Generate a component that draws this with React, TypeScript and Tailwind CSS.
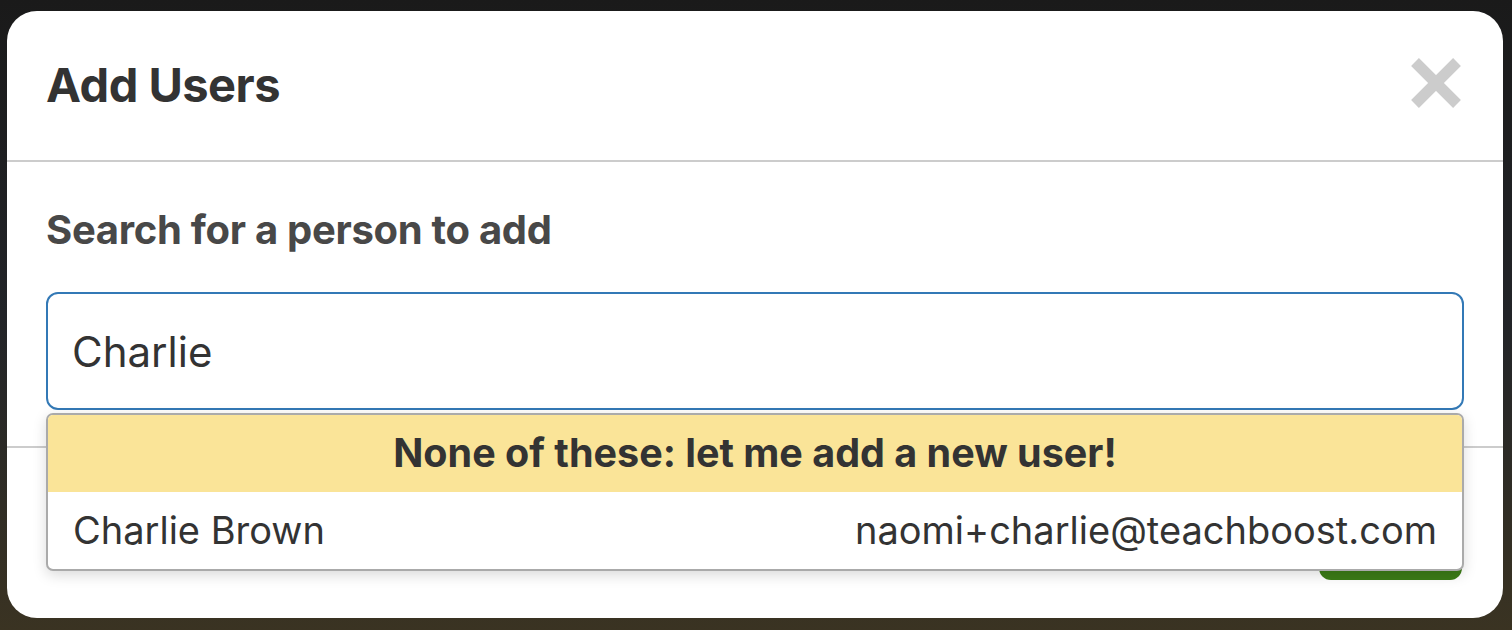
import React from "react";

/* ------------------------------ ADD USERS MODAL ------------------------------ */

function CloseIcon() {
  return (
    <svg width="50" height="50" viewBox="0 0 50 50" className="block">
      <line x1="4" y1="4" x2="46" y2="46" stroke="#cccccc" strokeWidth="11" />
      <line x1="46" y1="4" x2="4" y2="46" stroke="#cccccc" strokeWidth="11" />
    </svg>
  );
}

export default function App() {
  return (
    <div
      className="h-[630px] w-full overflow-hidden bg-gradient-to-b from-[#1a1a1a] via-[#222428] to-[#3a3322] pt-[11px] pl-[7px]"
      style={{ fontFamily: "Inter, 'Noto Sans', sans-serif" }}
    >
      <div className="flex h-[607px] w-[1496px] flex-col rounded-[30px] bg-white">
        {/* Header */}
        <div className="flex h-[151px] items-center justify-between border-b-2 border-[#cccccc] pl-[39px] pr-[42px]">
          <h1 className="text-[47px] font-bold tracking-[-0.5px] text-[#333333]">
            Add Users
          </h1>
          <button className="-mt-[6px]">
            <CloseIcon />
          </button>
        </div>

        {/* Body */}
        <div className="h-[286px] border-b-2 border-[#cccccc] px-[39px] pt-[38px]">
          <label className="block text-[40px] font-bold tracking-[-0.3px] text-[#484848]">
            Search for a person to add
          </label>

          <div className="relative mt-[32px]">
            <div className="flex h-[118px] items-center rounded-[12px] border-2 border-[#3379b6] px-[24px] text-[42px] text-[#333333]">
              Charlie
            </div>

            {/* Suggestions */}
            <div className="absolute top-[121px] left-0 right-0 z-10 overflow-hidden rounded-[7px] border-2 border-[#aaaaaa] bg-white shadow-[0_4px_14px_rgba(0,0,0,0.15)]">
              <div className="flex h-[77px] items-center justify-center bg-[#fae498] text-[39.5px] font-bold text-[#333333]">
                None of these: let me add a new user!
              </div>
              <div className="flex h-[77px] items-center justify-between px-[25px] text-[38px] text-[#333333]">
                <span>Charlie Brown</span>
                <span>naomi+charlie@teachboost.com</span>
              </div>
            </div>
          </div>
        </div>

        {/* Footer */}
        <div className="flex justify-end pr-[41px] pt-[32px]">
          <button
            aria-label="Add"
            className="h-[100px] w-[143px] rounded-[12px] bg-[#3c7c17]"
          />
        </div>
      </div>
    </div>
  );
}
